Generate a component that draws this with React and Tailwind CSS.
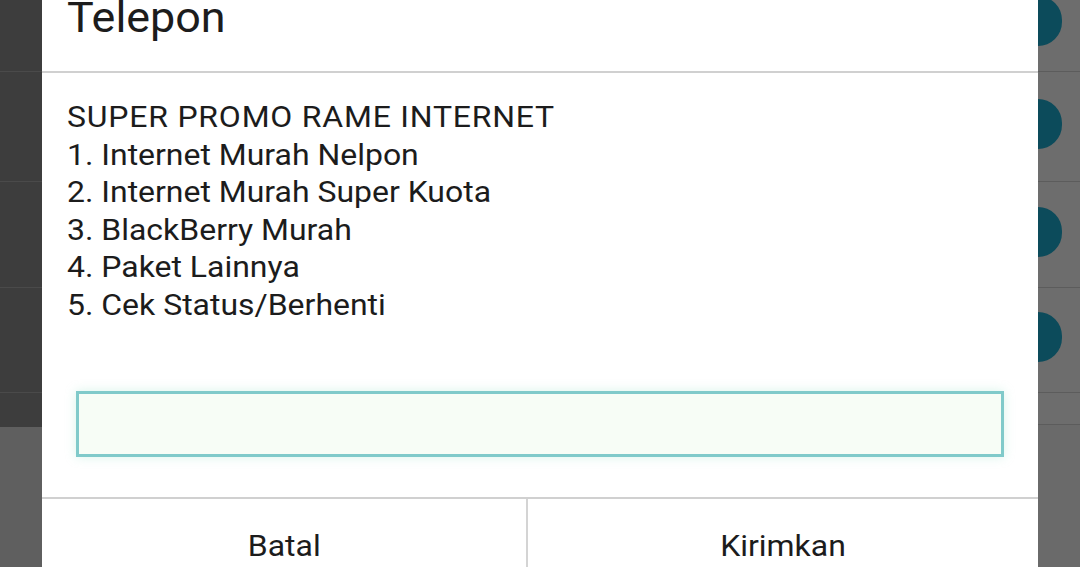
import React from 'react';

const menu = [
    'SUPER PROMO RAME INTERNET',
    '1. Internet Murah Nelpon',
    '2. Internet Murah Super Kuota',
    '3. BlackBerry Murah',
    '4. Paket Lainnya',
    '5. Cek Status/Berhenti',
];

// Rows of the list behind the dialog (dimmed)
const rows = [72, 110, 106, 105];

const LeftBackdrop = () => (
    <div className="w-[42px] shrink-0 flex flex-col bg-[#3d3d3d]">
        {rows.map((h, i) => (
            <div key={i} className="border-b border-[#4a4a4a]" style={{ height: h }} />
        ))}
        <div className="h-[34px]" />
        <div className="flex-1 bg-[#5f5f5f]" />
    </div>
);

const RightBackdrop = () => (
    <div className="w-[42px] shrink-0 flex flex-col bg-[#6d6d6d]">
        {rows.map((h, i) => (
            <div key={i} className="flex items-center border-b border-[#5c5c5c]" style={{ height: h }}>
                <div className={`w-[24px] h-[50px] rounded-r-full bg-[#0c4b5b] ${i === 0 ? '-mt-[30px]' : '-mt-[6px]'}`} />
            </div>
        ))}
        <div className="h-[32px] border-b border-[#5c5c5c]" />
        <div className="flex-1 bg-[#6a6a6a]" />
    </div>
);

const App = () => {
    return (
        <div className="w-[1080px] h-[567px] overflow-hidden flex bg-[#3d3d3d] font-['Roboto',sans-serif]">
            <LeftBackdrop />

            {/* ── DIALOG ── */}
            <div className="flex-1 flex flex-col bg-white text-[#1c1c1c]">
                <div className="h-[73px] shrink-0 pl-[25px] border-b-2 border-[#d0d0d0]">
                    <h2 className="inline-block origin-left scale-x-[1.068] text-[42px] leading-[40px] -mt-[2px]">Telepon</h2>
                </div>

                <div className="pt-[25px] pl-[25px] text-[30px] leading-[37.6px]">
                    {menu.map((line, i) => (
                        <p key={line} className={`origin-left scale-x-[1.065] ${i === 0 ? 'tracking-[0.75px]' : ''}`}>{line}</p>
                    ))}
                </div>

                <div className="px-[34px] pt-[67px] pb-[40px]">
                    <div className="h-[66px] border-[3px] border-[#80caca] bg-[#f7fdf6] shadow-[0_0_10px_rgba(200,240,225,0.7)]" />
                </div>

                <div className="flex flex-1 border-t-2 border-[#d0d0d0] text-[30px] leading-[37.6px]">
                    <button className="w-[484px] pt-[27px] text-center">
                        <span className="inline-block scale-x-[1.065]">Batal</span>
                    </button>
                    <div className="w-[2px] bg-[#d4d4d4]" />
                    <button className="flex-1 pt-[27px] text-center">
                        <span className="inline-block scale-x-[1.065]">Kirimkan</span>
                    </button>
                </div>
            </div>

            <RightBackdrop />
        </div>
    );
};

export default App;
